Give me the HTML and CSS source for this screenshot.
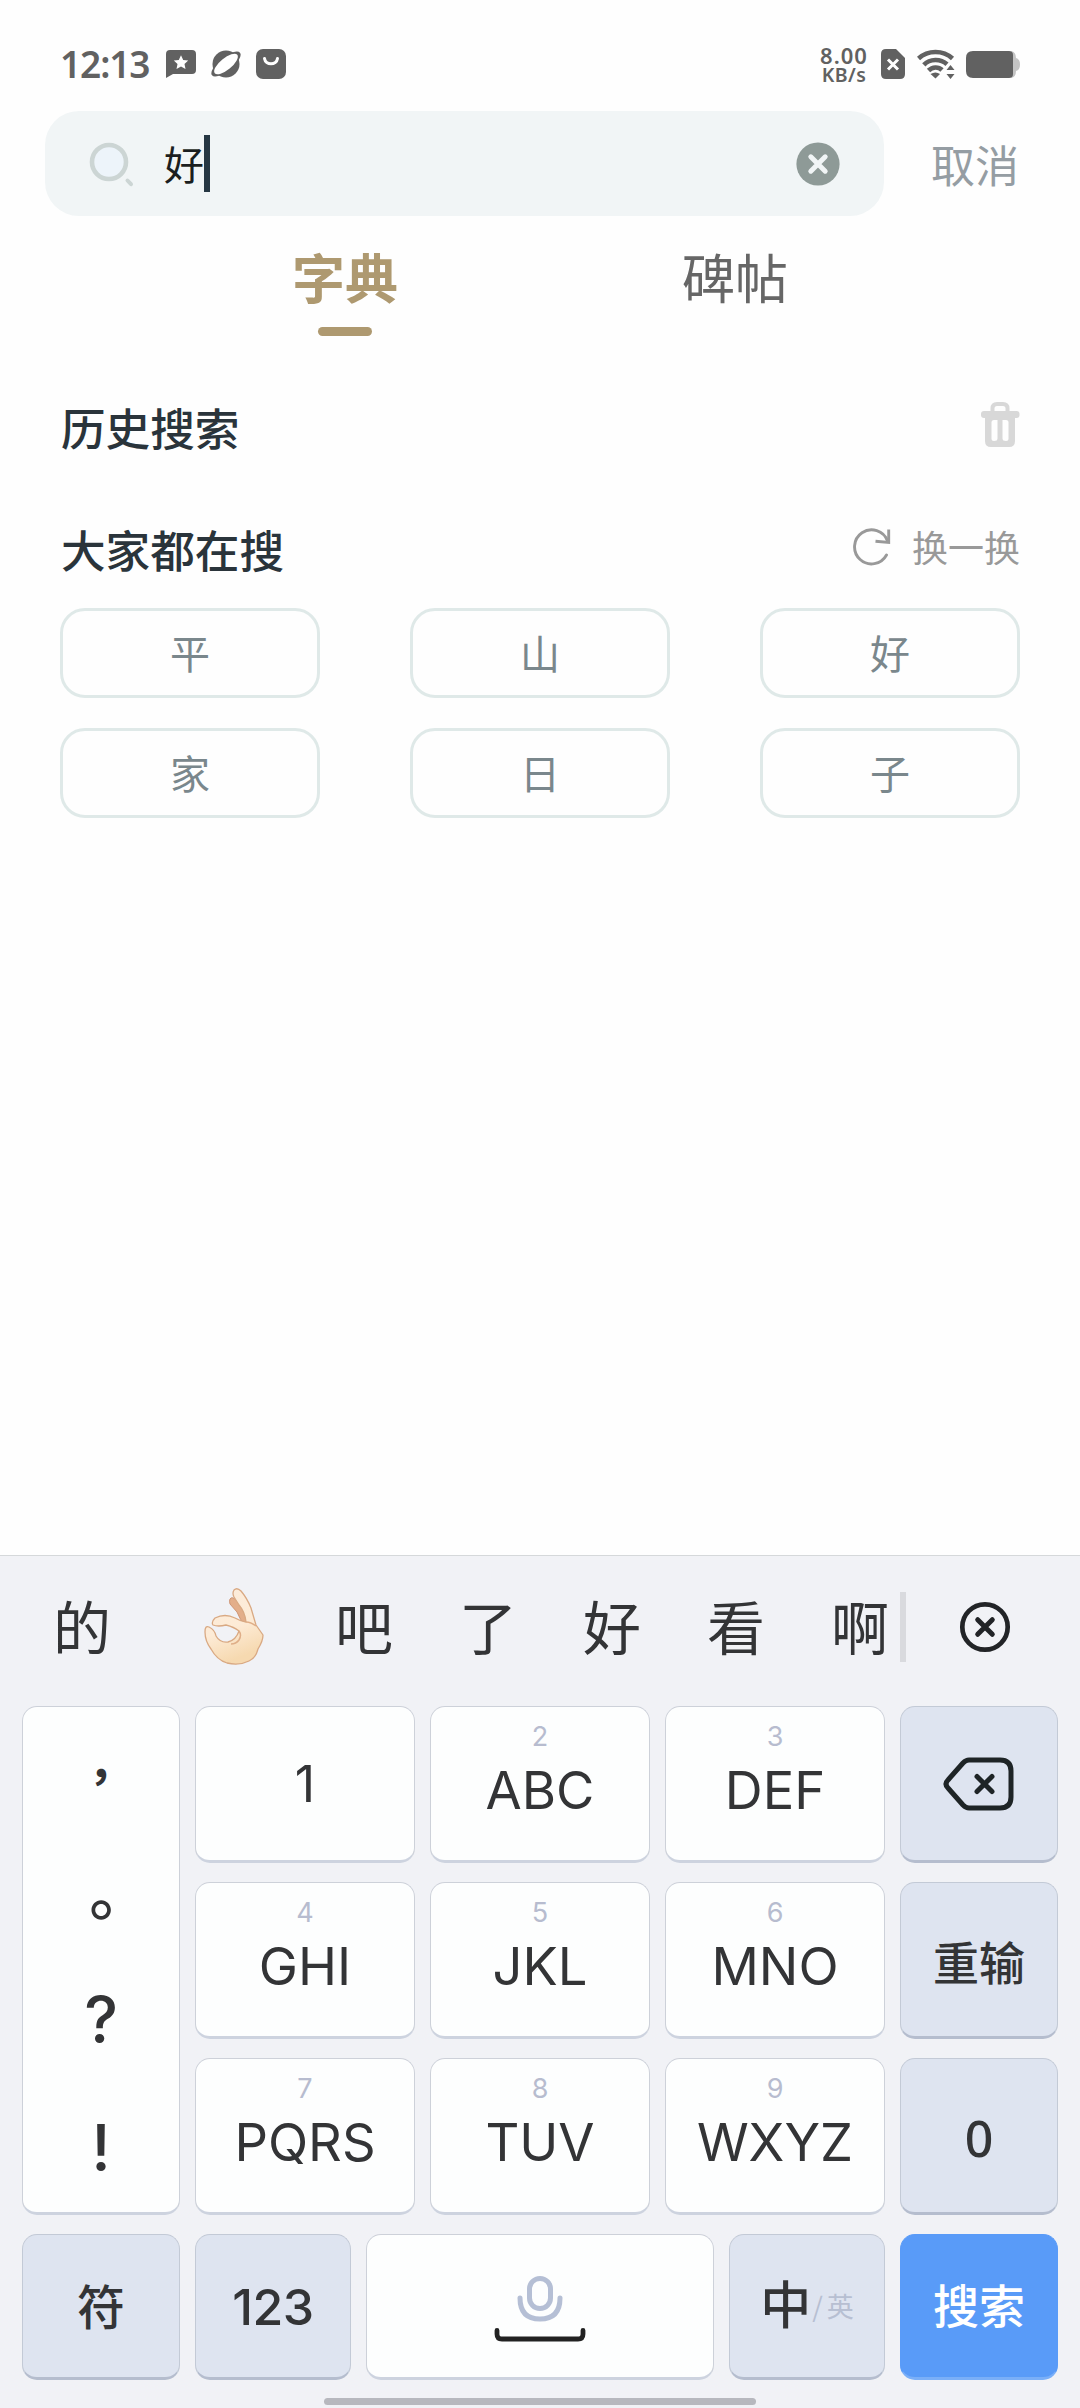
FILE: index.html
```html
<!DOCTYPE html>
<html lang="zh-CN">
<head>
<meta charset="utf-8">
<title>搜索</title>
<link rel="stylesheet" href="styles.css">
</head>
<body>
<header class="status">
  <span class="clock">12:13</span>
  <svg class="st-icon" width="30" height="30" viewBox="0 0 30 30"><path fill="#616161" d="M4 1H26Q30 1 30 5V21Q30 25 26 25H7L0 29V5Q0 1 4 1Z"/><path fill="#fff" d="M15 6.300l2.200 4.600 5 .6-3.700 3.500 1 5-4.500-2.500-4.500 2.500 1-5-3.700-3.500 5-.6z"/></svg>
  <svg class="st-icon" width="30" height="30" viewBox="0 0 30 30"><circle cx="15" cy="15" r="13.500" fill="#616161"/><g transform="rotate(-39 15 15)"><ellipse cx="15" cy="15" rx="18" ry="6.800" fill="#616161"/><ellipse cx="15" cy="15" rx="14.500" ry="5.800" fill="#fff"/></g></svg>
  <svg class="st-icon" width="30" height="30" viewBox="0 0 30 30"><rect width="30" height="30" rx="7" fill="#616161"/><path d="M8.500 9.500C9.500 16.500 20.500 16.500 21.500 9.500" fill="none" stroke="#fff" stroke-width="3" stroke-linecap="round"/></svg>
  <div class="speed"><span class="speed-n">8.00</span><span class="speed-u">KB/s</span></div>
  <svg class="sim" width="24" height="30" viewBox="0 0 24 30"><path fill="#616161" d="M5 0H15L24 9V25Q24 30 19 30H5Q0 30 0 25V5Q0 0 5 0Z"/><path d="M7 10.500L17 20.500M17 10.500L7 20.500" stroke="#fff" stroke-width="3"/></svg>
  <svg class="wifi" width="38" height="30" viewBox="0 0 38 30"><g fill="none" stroke="#616161" stroke-width="4.600"><path d="M1.500 9.500C11 .8 26 .8 35.500 9.500"/><path d="M6.800 15.800C13 9.500 23.500 9.500 30 15.200"/><path d="M11.500 21.500C15.500 17.500 21.500 17.500 25 21"/></g><path d="M13.500 25Q18.500 22 23 25L18.500 29.500Z" fill="#616161"/><path d="M33.500 16l4 5h-8zM33.500 30l4-5h-8z" fill="#616161"/></svg>
  <svg class="battery" width="54" height="27" viewBox="0 0 54 27"><path fill="#c4c4c4" d="M45 0Q50 1 50 7Q54 8 54 13.500Q54 19 50 20Q50 26 45 27Z"/><path fill="#616161" d="M7 0H43Q47 0 47 4V23Q47 27 43 27H7Q0 27 0 20V7Q0 0 7 0Z"/></svg>
</header>

<div class="search-row">
  <div class="search-box">
    <svg class="lens" width="46" height="46" viewBox="0 0 46 46"><circle cx="20" cy="20" r="17" fill="#edf4fa" stroke="#ccd5d4" stroke-width="4.600"/><path d="M38.500 38.500l3.500 3.700" stroke="#ccd5d4" stroke-width="4" stroke-linecap="round"/></svg>
    <span class="query">好</span><span class="caret"></span>
    <svg class="clear" width="44" height="44" viewBox="0 0 44 44"><circle cx="22" cy="22" r="21.600" fill="#8e9a97"/><path d="M14.800 14.800L29.200 29.200M29.200 14.800L14.800 29.200" stroke="#f1f5f6" stroke-width="5" stroke-linecap="round"/></svg>
  </div>
  <span class="cancel">取消</span>
</div>

<nav class="tabs">
  <div class="tab active">字典</div>
  <div class="tab">碑帖</div>
</nav>

<section class="head history">
  <h2>历史搜索</h2>
  <svg width="40" height="46" viewBox="0 0 40 46"><path d="M12.500 10V6.500Q12.500 2 17 2H23Q27.500 2 27.500 6.500V10" fill="none" stroke="#d8d8d8" stroke-width="4"/><rect x="1" y="9" width="38.500" height="7" rx="3" fill="#d8d8d8"/><path fill="#d8d8d8" fill-rule="evenodd" d="M5 14H35V39Q35 45 29 45H11Q5 45 5 39ZM14 18Q11.500 18 11.500 20.500V36.500Q11.500 39 14 39Q17.500 39 17.500 36.500V18ZM22.500 18V36.500Q22.500 39 26 39Q28.500 39 28.500 36.500V20.500Q28.500 18 26 18Z"/></svg>
</section>

<section class="head hot">
  <h2>大家都在搜</h2>
  <div class="refresh">
    <svg width="40" height="40" viewBox="0 0 40 40"><path d="M35.500 14A17 17 0 1 0 34.500 28" fill="none" stroke="#999" stroke-width="2.900" stroke-linecap="round"/><path d="M36.700 2.500V15.500L23.500 14.200" fill="none" stroke="#999" stroke-width="2.900"/></svg>
    <span>换一换</span>
  </div>
</section>

<div class="chips">
  <span class="chip">平</span><span class="chip">山</span><span class="chip">好</span>
  <span class="chip">家</span><span class="chip">日</span><span class="chip">子</span>
</div>

<footer class="keyboard">
  <div class="candidates">
    <span class="cand first">的</span>
    <svg class="emoji" width="62" height="80" viewBox="0 0 62 80">
      <defs><linearGradient id="skin" x1="0" y1="0" x2="0.300" y2="1"><stop offset="0" stop-color="#fcecdc"/><stop offset="0.600" stop-color="#fdebd6"/><stop offset="1" stop-color="#f6d9b0"/></linearGradient></defs>
      <path d="M27 12Q29 9 33 13L45 27L42 38Q37 33 34 25L27 17Q26 14 27 12Z" fill="#e3ae8a" stroke="#cf9676" stroke-width="1"/>
      <path d="M31 3Q34 0 38 4Q44 11 48 21L53 38L60 48Q60 54 55 62Q53 71 46 74Q36 79 24 76Q14 73 8 62Q2 54 2 45Q2 38 6 40Q12 43 13 49Q17 56 25 55Q33 53 36 44Q31 40 23 38Q15 40 10 38Q8 35 12 31Q22 26 32 31Q37 34 43 35Q42 25 36 18L31 10Q29 6 31 3Z" fill="url(#skin)" stroke="#d9a983" stroke-width="1.300" stroke-linejoin="round"/>
      <path d="M36 44Q39 48 36 53Q33 57 28 57M43 35Q48 35 53 39" fill="none" stroke="#dfae88" stroke-width="1.500"/>
    </svg>
    <span class="cand">吧</span><span class="cand">了</span><span class="cand">好</span><span class="cand">看</span><span class="cand">啊</span>
    <span class="divider"></span>
    <svg class="dismiss" width="52" height="52" viewBox="0 0 52 52" fill="none" stroke="#222427" stroke-linecap="round"><circle cx="26" cy="26" r="22.700" stroke-width="4.700"/><path d="M18.700 18.700L33.300 33.300M33.300 18.700L18.700 33.300" stroke-width="5"/></svg>
  </div>

  <div class="pad">
    <div class="key punct"><span class="p-comma" lang="zh-TW">，</span><span class="p-stop" lang="zh-TW">。</span><span class="p-q">?</span><span class="p-ex">!</span></div>
    <div class="key one">1</div>
    <div class="key"><small>2</small><b>ABC</b></div>
    <div class="key"><small>3</small><b>DEF</b></div>
    <div class="key fn"><svg width="72" height="54" viewBox="0 0 72 54" fill="none" stroke="#1e2426" stroke-width="5" stroke-linecap="round" stroke-linejoin="round"><path d="M26 3H57Q68 3 68 14V40Q68 51 57 51H26Q23 51 20 48L5 31Q1 27 5 23L20 6Q23 3 26 3Z"/><path d="M34 19.500L49 34.500M49 19.500L34 34.500"/></svg></div>
    <div class="key"><small>4</small><b>GHI</b></div>
    <div class="key"><small>5</small><b>JKL</b></div>
    <div class="key"><small>6</small><b>MNO</b></div>
    <div class="key fn cjk">重输</div>
    <div class="key"><small>7</small><b>PQRS</b></div>
    <div class="key"><small>8</small><b>TUV</b></div>
    <div class="key"><small>9</small><b>WXYZ</b></div>
    <div class="key fn zero">0</div>
  </div>
  <div class="bottom">
    <div class="key fn cjk sym">符</div>
    <div class="key fn num">123</div>
    <div class="key space"><svg width="96" height="70" viewBox="0 0 96 70" fill="none" stroke-linecap="round"><g stroke="#b5bfd5" stroke-width="5"><rect x="37.500" y="4.500" width="21" height="30" rx="10.500"/><path d="M28 24Q28 45 48 45Q68 45 68 24"/></g><path d="M5 56.500V60Q5 65 10 65H86Q91 65 91 60V56.500" stroke="#222" stroke-width="4.800"/></svg></div>
    <div class="key fn lang"><span class="zh">中</span><span class="slash">/</span><span class="en">英</span></div>
    <div class="key cjk go">搜索</div>
  </div>
  <div class="home-bar"></div>
</footer>
</body>
</html>
```
FILE: styles.css
```css
* { box-sizing: border-box; }

body {
  margin: 0;
  width: 1080px;
  height: 2408px;
  display: flex;
  flex-direction: column;
  overflow: hidden;
  background: #fefefe;
  font-family: "Noto Sans CJK SC", sans-serif;
}

svg { display: block; flex: none; }

/* status bar */
.status {
  height: 111px;
  padding: 17px 60px 0 60px;
  display: flex;
  align-items: center;
  color: #616161;
}
.clock {
  width: 106px;
  font: 600 37px/40px "Noto Sans", sans-serif;
  letter-spacing: -1.100px;
}
.st-icon { margin-right: 15px; }
.speed {
  margin-left: auto;
  margin-right: 12px;
  width: 50px;
  display: flex;
  flex-direction: column;
  align-items: center;
  font-family: "Noto Sans", sans-serif;
  font-weight: 600;
  white-space: nowrap;
}
.speed-n { font-size: 22px; line-height: 20px; letter-spacing: 1px; }
.speed-u { font-size: 19.500px; line-height: 19px; letter-spacing: 0.400px; }
.sim { margin-right: 12px; }
.wifi { margin-right: 11px; }

/* search field */
.search-row {
  height: 105px;
  padding-left: 45px;
  display: flex;
  align-items: center;
}
.search-box {
  width: 839px;
  height: 105px;
  border-radius: 34px;
  padding: 0 44px;
  display: flex;
  align-items: center;
  background: #f1f5f6;
}
.lens { margin-top: 3px; }
.query {
  margin-left: 29px;
  font-size: 40px;
  line-height: 58px;
  color: #1b1e20;
  margin-top: -2px;
}
.caret { width: 6px; height: 57px; background: #263743; }
.clear { margin-left: auto; }
.cancel {
  margin-left: 47px;
  font-size: 44px;
  line-height: 60px;
  color: #959da3;
  margin-top: 1px;
}

/* tabs */
.tabs { height: 164px; padding: 27px 150px 0; display: flex; }
.tab {
  flex: 1;
  display: flex;
  flex-direction: column;
  align-items: center;
  font-size: 53px;
  line-height: 66px;
  color: #666;
}
.tab.active { color: #ae9970; font-weight: 700; }
.tab.active::after {
  content: "";
  width: 54px;
  height: 9px;
  margin-top: 18px;
  border-radius: 5px;
  background: #ae9970;
}

/* section headings */
.head {
  padding: 0 60px;
  display: flex;
  justify-content: space-between;
  align-items: center;
}
.head h2 {
  margin: 3px 0 0 1px;
  font-size: 44.600px;
  line-height: 60px;
  font-weight: 500;
  color: #2a343b;
}
.history { height: 90px; }
.history svg { margin-top: -1px; }
.hot { height: 138px; padding-top: 16px; }
.refresh {
  display: flex;
  align-items: center;
  gap: 20px;
  font-size: 36px;
  line-height: 50px;
  color: #999;
}
.refresh span { margin-top: -2px; }

.chips {
  padding: 0 60px;
  display: grid;
  grid-template-columns: repeat(3, 260px);
  gap: 30px 90px;
}
.chip {
  height: 90px;
  border: 3px solid #dfe9e8;
  border-radius: 25px;
  font-size: 40px;
  line-height: 82px;
  text-align: center;
  color: #7a878c;
}

/* keyboard */
.keyboard {
  margin-top: auto;
  height: 853px;
  border-top: 1px solid #d5d8da;
  background: #f1f2f6;
  color: #333436;
}
.candidates {
  height: 150px;
  padding: 0 69px 8px 52px;
  display: flex;
  align-items: center;
}
.cand {
  width: 60px;
  margin-right: 64px;
  font-size: 58px;
  line-height: 70px;
  text-align: center;
  margin-top: -5px;
  flex: none;
}
.cand.first { margin-right: 91px; }
.emoji { margin-right: 69px; }
.divider { width: 6px; height: 70px; margin-left: -54px; background: #d9dade; flex: none; }
.dismiss { margin-left: auto; }

.pad {
  padding: 0 22px;
  display: grid;
  grid-template-columns: 158px repeat(3, 220px) 158px;
  grid-template-rows: repeat(3, 157px);
  gap: 19px 15px;
}
.bottom {
  padding: 19px 22px 0;
  display: grid;
  grid-template-columns: 158px 156px 348px 156px 158px;
  grid-template-rows: 146px;
  gap: 15px;
}
.key {
  border: 1px solid #cdd1d9;
  border-bottom: 3px solid #cdd3df;
  border-radius: 15px;
  background: #fdfefe;
  display: flex;
  flex-direction: column;
  align-items: center;
  font-family: Inter, "Noto Sans CJK SC", sans-serif;
}
.key small {
  margin-top: 16px;
  font-size: 27px;
  line-height: 28px;
  color: #b7bccf;
}
.key b { margin-top: 9px; font-weight: 400; font-size: 52.500px; line-height: 60px; }
.one { font-size: 50px; justify-content: center; }
.fn { background: #dee4f0; border-color: #c3cad6; border-bottom-color: #b5bdce; justify-content: center; }
.cjk {
  font-family: "Noto Sans CJK SC", sans-serif;
  font-size: 46px;
  line-height: 60px;
  font-weight: 500;
  justify-content: center;
}
.sym { font-size: 48px; padding-bottom: 4px; }
.zero, .num { font-size: 50px; font-weight: 500; }
.zero { font-family: "Noto Sans", sans-serif; padding-top: 5px; }
.num { padding-top: 1px; letter-spacing: -0.500px; }
.punct { grid-row: span 3; }
.punct span { line-height: 80px; height: 80px; }
.p-comma, .p-stop { font-family: "Noto Sans CJK TC", sans-serif; font-weight: 700; }
.p-comma { font-size: 46px; margin-top: 26px; }
.p-stop { font-size: 62px; margin-top: 54px; font-weight: 500; }
.p-q, .p-ex { font-size: 64px; font-weight: 500; }
.p-q { margin-top: 33px; }
.p-ex { margin-top: 48px; }
.space { justify-content: center; padding-top: 5px; }
.lang { flex-direction: row; align-items: center; font-family: "Noto Sans CJK SC", sans-serif; }
.zh { font-size: 51px; line-height: 60px; font-weight: 500; margin-top: -9px; }
.slash, .en { font-size: 27px; line-height: 40px; color: #b7bfd2; }
.slash { margin: 0 4px 0 1px; }
.go { background: #599bf8; color: #fff; border-color: #599bf8; border-bottom-color: #7aaff8; padding-bottom: 6px; }

.home-bar {
  width: 432px;
  height: 7px;
  margin: 18px auto 0;
  border-radius: 4px;
  background: #b7b8be;
}
```
